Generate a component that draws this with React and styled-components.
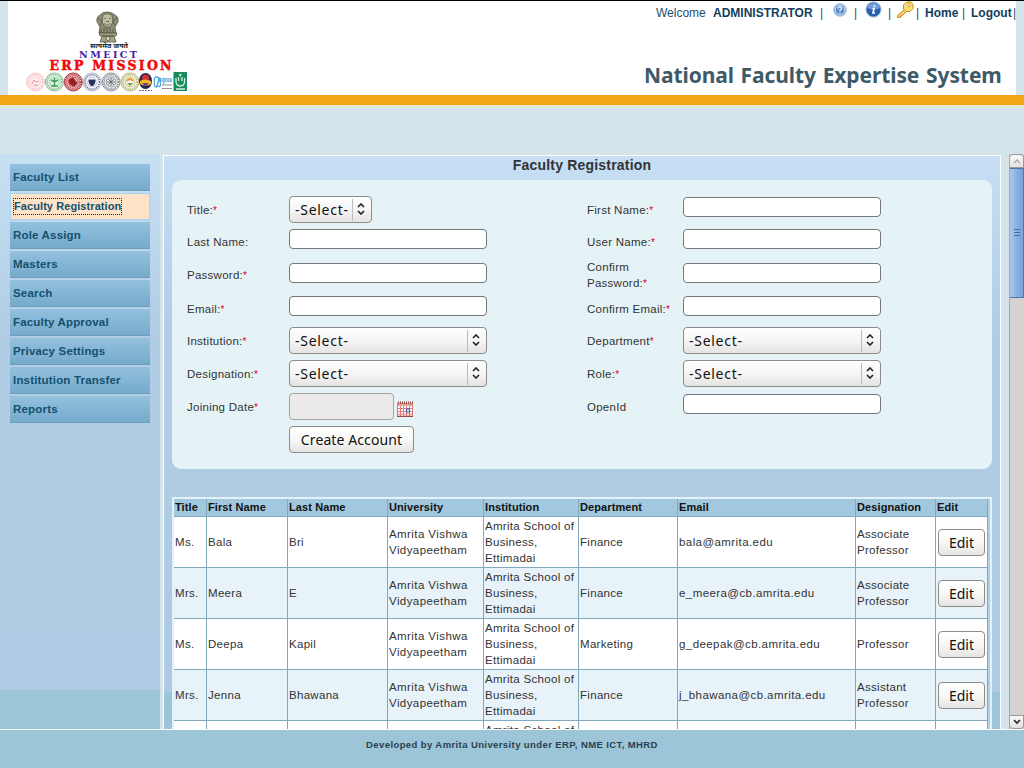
import React from "react";
import styled, { createGlobalStyle } from "styled-components";

const Global = createGlobalStyle`
  *, *::before, *::after { box-sizing: border-box; }
  body { margin: 0; font-family: "Liberation Sans", Arial, sans-serif; font-size: 11px; color: #333; }
  button, input, select { font-family: "Noto Sans", sans-serif; margin: 0; }
`;

const Page = styled.div`
  width: 1024px; height: 768px; overflow: hidden;
  display: flex; flex-direction: column;
  background: #d5e4ea;
`;

const Header = styled.header`
  height: 95px; flex: none;
  padding: 0 8px;
  border-top: 1px solid #000;
  background: #d3e4ec;
`;
const HeaderInner = styled.div`
  height: 94px; background: #fff;
  display: flex; justify-content: space-between;
`;
const Stripe = styled.div`
  height: 13px; flex: none;
  background: #f2a515;
  border-bottom: 3px solid #dfe8d0;
`;
const Spacer = styled.div`height: 46px; flex: none;`;

const LogoBox = styled.div`padding: 9px 0 0 16px;`;
const HeaderRight = styled.div`
  width: 373px; display: flex; flex-direction: column; justify-content: space-between;
`;
const UserBar = styled.div`
  display: flex; height: 24px; align-items: center;
  font-size: 12px; line-height: 24px; color: #1a4f70; white-space: pre;
`;
const UserItem = styled.span`
  flex: none; width: ${p => p.$w}px;
  font-weight: ${p => (p.$bold ? 700 : 400)};
  color: ${p => (p.$bold ? "#123f5e" : "#1d506e")};
`;
const IconItem = styled.span`
  flex: none; width: ${p => p.$w}px; height: 24px; display: flex;
`;
const SystemTitle = styled.h1`
  margin: 0; padding: 0 0 5px 1px; white-space: nowrap;
  font: 700 21px/30px "Noto Sans", sans-serif; color: #3e5a66;
  letter-spacing: -0.1px; word-spacing: 1.4px;
`;

const Body = styled.div`
  height: 575px; flex: none; display: flex; overflow: hidden;
`;
const Sidebar = styled.nav`
  width: 160px; flex: none; padding: 10px;
  display: flex; flex-direction: column; gap: 2px;
  background: linear-gradient(#c8e0f4 0, #b0cde4 180px, #aecbe3 536px, #9dc5d8 536px);
`;
const NavItem = styled.a`
  height: 27px; flex: none; display: flex; align-items: center;
  padding: 0 3px 1px;
  font-weight: 700; font-size: 11.5px; letter-spacing: 0.18px; color: #14506f;
  background: ${p => (p.$active ? "#fee3c8" : "linear-gradient(#93c1de, #76aacb)")};
  border: 0 solid #a3d6f2;
  border-width: ${p => (p.$active ? "1px" : "0 0 1px")};
  ${p => (p.$active ? "font-size: 11px; letter-spacing: 0.08px; padding: 0 2px;" : "border-color: #6d9dbb;")}
`;
const FocusLabel = styled.span`
  height: 17px; line-height: 15px; border: 1px dotted #222; white-space: nowrap;
`;

const Panel = styled.main`
  width: 838px; flex: none; margin: 1px 0 0 3px; overflow: hidden;
  border: solid #fff; border-width: 1px 1px 0;
  padding: 0 8px;
  background: linear-gradient(#c6dff4 0, #b0cde4 180px, #aecbe3 536px, #9dc5d8 536px);
`;
const PanelTitle = styled.h2`
  margin: 0; height: 24px; line-height: 18px; text-align: center;
  font-size: 14px; letter-spacing: 0.2px; font-weight: 700; color: #333;
`;
const Form = styled.form`
  height: 289px; border-radius: 9px; background: #e5f3f7;
  padding: 14px 0 0 15px; display: flex;
`;
const FormColumn = styled.div`
  width: ${p => p.$w}px; flex: none;
`;
const FormRow = styled.div`
  display: flex; height: ${p => p.$h}px;
`;
const Label = styled.label`
  width: ${p => p.$w}px; flex: none; align-self: center; padding: ${p => (p.$raised ? "0 0 1px" : "1px 0 0")};
  font-size: 11.5px; line-height: 16px; letter-spacing: 0.26px; color: #333;
`;
const Star = styled.span`color: #e2001a; font-size: 10px; line-height: 10px; letter-spacing: 0;`;
const Control = styled.div`padding-top: ${p => p.$drop}px; display: flex; align-items: flex-start;`;
const TextInput = styled.input`
  width: 198px; height: 20px; padding: 0 4px;
  border: 1px solid #77777a; border-radius: 4px; background: #fff;
`;
const DateInput = styled(TextInput)`
  width: 105px; height: 27px; margin-right: 3px; background: #edebe9; border-color: #a6a4a2;
`;
const SelectBox = styled.div`
  width: ${p => p.$w}px; height: 27px;
  display: flex; align-items: center; justify-content: space-between;
  padding: 0 0 0 5px;
  font: 14px/26px "Noto Sans", sans-serif; letter-spacing: 0.72px; color: #111; white-space: nowrap;
  border: 1px solid #8e8c8a; border-radius: 4px;
  background: linear-gradient(#fff, #f6f5f5 50%, #e6e4e2);
`;
const Arrows = styled.span`
  width: 19px; height: 22px; flex: none; border-left: 1px solid #bbb; padding: 0 2px 1px 0;
  display: flex; align-items: center; justify-content: center;
`;
const PushButton = styled.button`
  width: ${p => p.$w}px; height: 27px; padding: 0;
  font-size: 14px; line-height: 24px; letter-spacing: ${p => p.$ls || 0}px; color: #111; white-space: nowrap;
  border: 1px solid #8e8c8a; border-radius: 4px;
  background: linear-gradient(#fff, #f8f8f7 50%, #e6e4e2);
`;
const EditButton = styled(PushButton)`margin: 1px 0 0 1px;`;

const COLS = "33px 81px 100px 96px 95px 99px 178px 80px 52px";
const Table = styled.div`
  margin-top: 28px; width: 820px;
  border: 2px solid #e3f1f8; border-bottom: 0;
  background: #b0cfe6;
`;
const HeadRow = styled.div`
  display: grid; grid-template-columns: ${COLS}; height: 18px;
  color: #111; font-weight: 700;
`;
const HeadCell = styled.div`
  padding-left: 1px; line-height: 16px; background: #a1c8de; letter-spacing: 0.1px; white-space: nowrap;
  border: solid #80a9c0; border-width: 0 1px 1px 0;
`;
const Row = styled.div`
  display: grid; grid-template-columns: ${COLS}; height: ${p => (p.$partial ? 18 : 51)}px;
  background: ${p => (p.$odd ? "#e7f2f9" : "#fff")}; width: 814px;
`;
const Cell = styled.div`
  display: flex; align-items: center; padding-left: 1px;
  font-size: 11.5px; line-height: 16px; letter-spacing: ${p => (p.$wide ? 0.42 : 0.3)}px; color: #333; white-space: pre;
  border: solid #80a9c0; border-width: 0 1px 1px 0;
`;

const ScrollBar = styled.div`
  width: 15px; flex: none; margin-left: 8px;
  display: flex; flex-direction: column; background: #d5d2d0; border-left: 1px solid #aaa7a5;
`;
const ScrollButton = styled.div`
  height: 14px; flex: none; display: flex; align-items: center; justify-content: center;
  border: 1px solid #999; border-left-width: 0; border-radius: ${p => (p.$down ? "0 0 4px 4px" : "4px 4px 0 0")};
  background: linear-gradient(#fafafa, #e4e2e0);
`;
const Thumb = styled.div`
  height: 130px; flex: none; display: flex; align-items: center; justify-content: center;
  border: 1px solid #4c78b0; border-left-width: 0;
  background: linear-gradient(90deg, #a9c8ee, #86addf 60%, #7ba3d6);
`;
const Track = styled.div`flex: 1;`;

const Footer = styled.footer`
  height: 39px; flex: none; border-top: 1px solid #fff; background: #9dc5d8;
  text-align: center; font-size: 9.5px; font-weight: 700; line-height: 30px; letter-spacing: 0.4px; color: #29414f;
`;

const SEALS = [
  ["#f7c9c9", "#e58d92", "#fff3f2"],
  ["#7bc08f", "#3c9c5c", "#e8f6ea"],
  ["#b83a3f", "#9b1c25", "#f0c3c2"],
  ["#a9b4c9", "#25345f", "#f5f7fb"],
  ["#8e9399", "#596168", "#e3e5e7"],
  ["#c4b06d", "#6f9c58", "#faf3df"],
];

function Logo() {
  return (
    <svg width="166" height="84" viewBox="24 10 166 84">
      <g fill="#8f8f75" stroke="#4b4c3e" strokeWidth=".7">
        <path d="M97 22q-1-5 3-7q2-3 7-3t8 3q4 2 3 7l-3 5l1 6H99l1-6z" />
        <path d="M103 15q4-3 9 0l1 7l-3 5h-5l-3-5z" fill="#bcbca0" />
        <path d="M98 18l4 3l-2 5m17-8l-4 3l2 5M104.500 18.500h1.500m3 0h1.500m-4.500 3h3m-5 2l3 2l3-2m-6 4v5m3-5v5m3-5v5m-9-4v4m12-4v4" fill="none" />
        <path d="M99 33h18l-1 3h-16zM102 36h12l2 6H100z" fill="#a4a283" />
        <circle cx="108" cy="38.500" r="2" fill="#dedbc1" />
      </g>
      <text x="90" y="48" fontSize="6" fontWeight="700" textLength="38" lengthAdjust="spacingAndGlyphs" fontFamily="'Noto Sans', sans-serif" fill="#222">सत्यमेव जयते</text>
      <text x="79" y="58" fontSize="9.600" fontWeight="700" textLength="58" fontFamily="'DejaVu Serif', serif" fill="#4b1aa5">NMEICT</text>
      <text x="49.500" y="70" fontSize="12.500" fontWeight="700" textLength="122" fontFamily="'DejaVu Serif', serif" fill="#f00a0a" stroke="#f00a0a" strokeWidth=".5">ERP MISSION</text>
      {SEALS.map(([ring, ink, fill], i) => {
        const cx = 35.5 + i * 18.9;
        return (
          <g key={i} fill="none">
            <circle cx={cx} cy="82" r="9" fill={fill} stroke={ring} />
            <circle cx={cx} cy="82" r="7.200" stroke={ink} strokeWidth={i === 2 ? 3 : 1.6} strokeDasharray="1 1" opacity={i === 0 ? 0.6 : 0.75} />
            <circle cx={cx} cy="82" r="4.800" fill={fill} stroke={ring} strokeWidth=".8" />
            {i === 0 && <path d="M32 84l2-4l2 2l3-1M34 85h4" stroke={ink} />}
            {i === 1 && <path d="M54.500 78v8M51 80l3.500 2l3.500-2M51 86h7" stroke={ink} strokeWidth="1.500" />}
            {i === 2 && <path d="M69 80l4-2l4 5l-3 3l-4-2z" fill={ink} stroke={ink} />}
            {i === 3 && <path d="M88 79h8v3q-1 4-4 5q-3-1-4-5z" fill={ink} stroke="#fff" />}
            {i === 4 && <path d="M111 78v8m-4-4h8m-7-3l6 6m0-6l-6 6" stroke={ink} strokeWidth=".8" />}
            {i === 5 && <g><path d="M127 81q3-4 6 0" stroke="#e1862c" strokeWidth="1.500" /><path d="M127 83h6l-3 3z" fill={ink} /></g>}
          </g>
        );
      })}
      <ellipse cx="145.500" cy="81" rx="6.500" ry="8" fill="#272759" />
      <circle cx="145.500" cy="78" r="3.500" fill="#d7332c" />
      <path d="M140 81q5-3 11 0v3q-5 3-11 0z" fill="#edba28" />
      <path d="M142 83l3.500 3l3.500-3" fill="#793878" />
      <path d="M139 90.500h13" stroke="#777" strokeDasharray="2 1" />
      <path d="M154.500 82q-1-5 2-5q3 0 2 4t-2 6q-3 0-2-5m3 4q3 2 3-2t-2-6q3 0 2 4" fill="none" stroke="#4aa3dc" strokeWidth="1.300" />
      <text x="161.500" y="81.500" fontSize="6.500" textLength="10.500" lengthAdjust="spacingAndGlyphs" fontFamily="'Liberation Sans', sans-serif" fontWeight="700" fill="#3a8fd1">ignou</text>
      <path d="M162 85h10M162 88.500h10" stroke="#777" strokeWidth="1.200" strokeDasharray="2 .6" />
      <rect x="173.500" y="72" width="13.500" height="19" fill="#178c5c" />
      <path d="M176 78v3q0 5 4.300 5t4.300-5v-3M178.500 77v4m3.500-4v4M176 89h9" fill="none" stroke="#d6f3df" strokeWidth="1.300" />
      <circle cx="180.300" cy="75" r="1.200" fill="#d6f3df" />
    </svg>
  );
}

const HelpIcon = () => (
  <svg width="16" height="17" viewBox="0 -1 16 17">
    <circle cx="8" cy="8" r="6.500" fill="#7ea6de" stroke="#c3d3ea" />
    <circle cx="8" cy="8" r="4.800" fill="#5c8bcf" stroke="#e7effa" strokeWidth=".8" />
    <path d="M6.300 6.500q0-1.700 1.700-1.700t1.700 1.500Q9.700 7.300 8 8.300v.8M8 10.200v1.200" fill="none" stroke="#fff" strokeWidth="1.300" />
  </svg>
);
const InfoIcon = () => (
  <svg width="17" height="17" viewBox="0 0 17 17">
    <circle cx="8.500" cy="8.500" r="7.500" fill="#2860ae" stroke="#9bb5d8" />
    <path d="M2 7q1-5 6.500-5T15 7q-6 3-13 0z" fill="#6f9cda" />
    <path d="M9.500 4.200v1.500M7.500 7.500h1.500l-1 4.500h2" fill="none" stroke="#fff" strokeWidth="1.700" />
  </svg>
);
const KeyIcon = () => (
  <svg width="18" height="18" viewBox="0 0 18 18">
    <path d="M8.500 8.500L1.500 14.500v2h3v-1.500h1.500v-1.500h1.500l3-3z" fill="#f9d35c" stroke="#c98a24" />
    <path d="M7.500 4l3-3h4.500l2 2.500v4l-3 3h-4l-2.500-2.500z" fill="#fcdf70" stroke="#c98a24" />
    <circle cx="13" cy="4.500" r="1.400" fill="#fff" stroke="#c98a24" strokeWidth=".8" />
  </svg>
);
const CalendarIcon = styled(({ className }) => (
  <svg className={className} width="16" height="16" viewBox="0 0 16 16">
    <rect x=".5" y="2.500" width="15" height="12.500" fill="#fff" stroke="#d67a73" />
    <path d="M1 4h14" stroke="#e8a29a" strokeWidth="2" />
    <path d="M1 1.500h15" stroke="#8b4540" strokeWidth="2" strokeDasharray="1 1" />
    <path d="M3.500 5v10M6.500 5v10M9.500 5v10M12.500 5v10M1 7.500h14M1 10.500h14M1 13h14" stroke="#e6736d" strokeWidth=".9" />
    <rect x="9.500" y="8" width="3" height="3" fill="#fff" stroke="#2754a8" />
    <path d="M0 15.500h16" stroke="#9c4743" />
  </svg>
))`margin-top: 8px;`;

function Select({ w = 198 }) {
  return (
    <SelectBox $w={w}>
      <span>-Select-</span>
      <Arrows>
        <svg width="8" height="12" viewBox="0 0 8 12" fill="none" stroke="#222" strokeWidth="1.600">
          <path d="M1 4l3-3l3 3M1 8l3 3l3-3" />
        </svg>
      </Arrows>
    </SelectBox>
  );
}

const NAV = ["Faculty List", "Faculty Registration", "Role Assign", "Masters", "Search", "Faculty Approval", "Privacy Settings", "Institution Transfer", "Reports"];
const HEIGHTS = [31, 33, 33, 34, 33, 33, 33, 33];
const text = <TextInput />;
const LEFT = [
  ["Title:", true, 2, <Select w={83} />],
  ["Last Name:", false, 4, text],
  ["Password:", true, 5, text],
  ["Email:", true, 5, text],
  ["Institution:", true, 2, <Select />],
  ["Designation:", true, 2, <Select />],
  ["Joining Date", true, 2, <><DateInput disabled /><CalendarIcon /></>],
  ["", false, 2, <PushButton type="button" $w={125} $ls={0.1}>Create Account</PushButton>],
];
const RIGHT = [
  ["First Name:", true, 3, text],
  ["User Name:", true, 4, text],
  ["Confirm Password:", true, 5, text],
  ["Confirm Email:", true, 5, text],
  ["Department", true, 2, <Select />],
  ["Role:", true, 2, <Select />],
  ["OpenId", false, 3, text],
];
const HEAD = ["Title", "First Name", "Last Name", "University", "Institution", "Department", "Email", "Designation", "Edit"];
const UNI = "Amrita Vishwa\nVidyapeetham";
const INST = "Amrita School of\nBusiness,\nEttimadai";
const ROWS = [
  ["Ms.", "Bala", "Bri", UNI, INST, "Finance", "bala@amrita.edu", "Associate\nProfessor"],
  ["Mrs.", "Meera", "E", UNI, INST, "Finance", "e_meera@cb.amrita.edu", "Associate\nProfessor"],
  ["Ms.", "Deepa", "Kapil", UNI, INST, "Marketing", "g_deepak@cb.amrita.edu", "Professor"],
  ["Mrs.", "Jenna", "Bhawana", UNI, INST, "Finance", "j_bhawana@cb.amrita.edu", "Assistant\nProfessor"],
];
const NEXT_ROW = ["", "", "", "", "Amrita School of", "", "", "", ""];

function Fields({ items, width, labelWidth }) {
  return (
    <FormColumn $w={width}>
      {items.map(([label, required, drop, control], i) => (
        <FormRow key={i} $h={HEIGHTS[i]}>
          <Label $w={labelWidth} $raised={i > 3}>{label}{required && <Star>*</Star>}</Label>
          <Control $drop={drop}>{control}</Control>
        </FormRow>
      ))}
    </FormColumn>
  );
}

export default function App() {
  return (
    <Page>
      <Global />
      <Header>
        <HeaderInner>
          <LogoBox><Logo /></LogoBox>
          <HeaderRight>
            <UserBar>
              <UserItem $w={13} />
              <UserItem $w={57}>Welcome</UserItem>
              <UserItem $w={107} $bold>ADMINISTRATOR</UserItem>
              <UserItem $w={12}>|</UserItem>
              <IconItem $w={22}><HelpIcon /></IconItem>
              <UserItem $w={11}>|</UserItem>
              <IconItem $w={23}><InfoIcon /></IconItem>
              <UserItem $w={8}>|</UserItem>
              <IconItem $w={20}><KeyIcon /></IconItem>
              <UserItem $w={9}>|</UserItem>
              <UserItem $w={37} $bold>Home</UserItem>
              <UserItem $w={9}>|</UserItem>
              <UserItem $w={42} $bold>Logout</UserItem>
              <UserItem $w={3}>|</UserItem>
            </UserBar>
            <SystemTitle>National Faculty Expertise System</SystemTitle>
          </HeaderRight>
        </HeaderInner>
      </Header>
      <Stripe />
      <Spacer />
      <Body>
        <Sidebar>
          {NAV.map((name, i) => (
            <NavItem key={name} $active={i === 1}>
              {i === 1 ? <FocusLabel>{name}</FocusLabel> : name}
            </NavItem>
          ))}
        </Sidebar>
        <Panel>
          <PanelTitle>Faculty Registration</PanelTitle>
          <Form>
            <Fields items={LEFT} width={400} labelWidth={102} />
            <Fields items={RIGHT} width={300} labelWidth={96} />
          </Form>
          <Table>
            <HeadRow>{HEAD.map(h => <HeadCell key={h}>{h}</HeadCell>)}</HeadRow>
            {ROWS.map((r, i) => (
              <Row key={i} $odd={i % 2 === 1}>
                {r.map((c, j) => <Cell key={j} $wide={j === 3 || j === 6}>{c}</Cell>)}
                <Cell><EditButton $w={47}>Edit</EditButton></Cell>
              </Row>
            ))}
            <Row $partial>
              {NEXT_ROW.map((c, j) => <Cell key={j}>{c}</Cell>)}
            </Row>
          </Table>
        </Panel>
        <ScrollBar>
          <ScrollButton>
            <svg width="8" height="6" viewBox="0 0 8 6" fill="none" stroke="#aaa" strokeWidth="1.500"><path d="M1 5l3-3l3 3" /></svg>
          </ScrollButton>
          <Thumb>
            <svg width="6" height="8" viewBox="0 0 6 8" stroke="#3f6ca5"><path d="M0 .5h6M0 3.500h6M0 6.500h6" /></svg>
          </Thumb>
          <Track />
          <ScrollButton $down>
            <svg width="8" height="6" viewBox="0 0 8 6" fill="none" stroke="#222" strokeWidth="1.600"><path d="M1 1l3 3l3-3" /></svg>
          </ScrollButton>
        </ScrollBar>
      </Body>
      <Footer>Developed by Amrita University under ERP, NME ICT, MHRD</Footer>
    </Page>
  );
}
